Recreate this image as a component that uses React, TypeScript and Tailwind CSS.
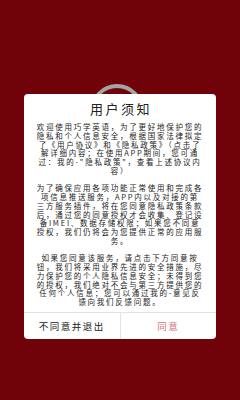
const paragraphs = [
  [
    "欢迎使用巧学英语，为了更好地保护您的",
    "隐私和个人信息安全，根据国家法律拟定",
    "了《用户协议》和《隐私政策》（点击了",
    "解详细内容；在使用APP期间，您可通",
    "过：我的-\"隐私政策\"，查看上述协议内",
    "容）",
  ],
  [
    "为了确保应用各项功能正常使用和完成各",
    "项信息推送服务，APP内以及对接的第",
    "三方服务插件，将在您同意隐私政策条款",
    "后，通过您的同意授权才会收集、登记设",
    "备IMEI、数据存储权限；如果您不同意",
    "授权，我们仍将会为您提供正常的应用服",
    "务。",
  ],
  [
    "如果您同意该服务，请点击下方同意按",
    "钮，我们将采用业界先进的安全措施，尽",
    "力保护您的个人隐私信息安全；未得到您",
    "的授权，我们绝对不会与第三方提供您的",
    "任何个人信息；您可以通过我的-意见反",
    "馈向我们反馈问题。",
  ],
];

const App = () => {
  return (
    <div
      className="relative w-[240px] h-[400px] bg-[#6f0309] flex flex-col items-center pt-[94px] overflow-hidden"
      style={{ fontFamily: '"Noto Sans CJK SC", "Liberation Sans", sans-serif' }}>
      {/* spinner ring peeking out behind the dialog */}
      <div className="absolute left-[90px] top-[84px] w-[54px] h-[54px] rounded-full border-[4px] border-[#a3a3a3]" />

      <div className="relative w-[192px] bg-white rounded-[4px] flex flex-col">
        <div className="h-[29px] flex items-center justify-center text-[13px] tracking-[2.5px] text-[#222] leading-none pl-[2px]">
          用户须知
        </div>

        <div className="flex flex-col gap-[8.75px] pb-[5px] text-[7.5px] leading-[8.75px] tracking-[1.75px] text-[#1a1a1a] text-center">
          {paragraphs.map((lines, i) => (
            <div key={i} className="flex flex-col items-center">
              {lines.map((line, j) => (
                <span key={j} className="whitespace-nowrap h-[8.75px]">
                  {line}
                </span>
              ))}
            </div>
          ))}
        </div>

        <div className="h-[27px] flex border-t border-[#e3e3e3] text-[9.5px] tracking-[1.5px]">
          <button className="flex-1 flex items-center justify-center text-[#222] border-r border-[#e3e3e3]">
            不同意并退出
          </button>
          <button className="flex-1 flex items-center justify-center text-[#d9737a]">
            同意
          </button>
        </div>
      </div>
    </div>
  );
};

export default App;
